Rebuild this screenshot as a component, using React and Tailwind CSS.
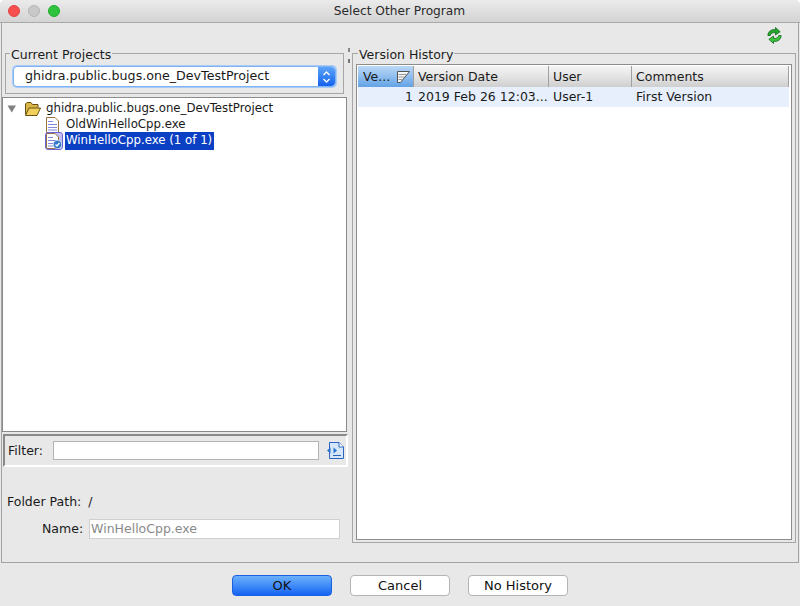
const FONT = 'font-["DejaVu_Sans",sans-serif]'

const COLUMNS = [
  { label: 'Version Date', width: 'w-[135px]' },
  { label: 'User', width: 'w-[83px]' },
  { label: 'Comments', width: 'flex-1' },
]

function FolderIcon() {
  return (
    <svg width="17" height="14" viewBox="0 0 17 14" className="shrink-0">
      <path d="M1.500 12.500V2L3 0.500h4l1.500 2h5.500v3" fill="#d9b548" stroke="#6b5210" />
      <path d="M1.500 13.500h11.500l3.500-7.500H5z" fill="#f0cf5c" stroke="#6b5210" strokeLinejoin="round" />
    </svg>
  )
}

function DocIcon({ checked }) {
  return (
    <svg width="16" height="16" viewBox="0 0 16 16" className="shrink-0">
      <path d="M0.500 0.500h8.500l3.500 3.500v11.500h-12z" fill="#fff" stroke="#9a7440" />
      <path d="M2 4.500h5M2 7.500h9M2 10.500h9M2 13h9" stroke="#8387dc" />
      {checked && <circle cx="11.500" cy="11.500" r="4.200" fill="#2f78c9" stroke="#fff" strokeWidth="0.600" />}
      {checked && <path d="M9.500 11.500l1.500 1.500 2.500-3" fill="none" stroke="#fff" strokeWidth="1.300" />}
    </svg>
  )
}

function RefreshIcon() {
  return (
    <svg width="17" height="17" viewBox="0 0 18 18">
      <path d="M2 9C2 4.500 6 2 10 3V0.500L15 5l-5 3.500V6C7.500 5.500 5 6.500 4.500 9z" fill="#22a82c" stroke="#0c6414" strokeWidth="0.800" strokeLinejoin="round" />
      <path d="M16 9c0 4.500-4 7-8 6v2.500L3 13l5-3.500V12c2.500.5 5-.5 5.500-3z" fill="#3cc43e" stroke="#0c6414" strokeWidth="0.800" strokeLinejoin="round" />
    </svg>
  )
}

function FilterOptionsIcon() {
  return (
    <svg width="17" height="17" viewBox="0 0 17 17">
      <path d="M2.500 0.500h9.500l4.500 4.500v11.500h-14z" fill="#d5e6fa" stroke="#2a64c0" />
      <path d="M12 0.500v4.500h4.500" fill="#fff" stroke="#2a64c0" />
      <path d="M6 13.500h8" stroke="#2a64c0" />
      <path d="M0 8.500L3.500 5.500v6zM10 8.500L6.500 5.500v6z" fill="#2a70d0" />
    </svg>
  )
}

function SortIcon() {
  return (
    <svg width="13" height="12" viewBox="0 0 13 12">
      <path d="M0.500 0.500h12L3.500 11.500h-3z" fill="#f6f6f6" stroke="#555" />
      <path d="M1.500 3.500h8M1.500 6h6M1.500 8.500h4" stroke="#999" />
    </svg>
  )
}

function TitledBox({ title, className, legendClass, children }) {
  return (
    <fieldset className={`border border-[#a6a6a6] ${className}`}>
      <legend className={`px-[1px] pt-[4px] text-[12.500px] leading-[14px] text-[#1c1c1c] ${legendClass}`}>{title}</legend>
      {children}
    </fieldset>
  )
}

function DialogButton({ label, primary }) {
  return (
    <button
      className={
        primary
          ? 'h-[21px] w-[100px] rounded-[4px] border border-[#1a62e0] bg-gradient-to-b from-[#6cb0fb] to-[#1463f3] text-[13px] text-[#111]'
          : 'h-[21px] w-[100px] rounded-[4px] border border-[#b4b4b4] bg-white text-[13px] text-[#111]'
      }
    >
      {label}
    </button>
  )
}

export default function App() {
  return (
    <div className={`flex h-[606px] w-[800px] flex-col overflow-hidden rounded-t-[5px] bg-[#e8e8e8] ${FONT}`}>
      {/* Title bar */}
      <div className="flex h-[23px] shrink-0 items-center border-b border-[#a9a9a9] bg-gradient-to-b from-[#ebebeb] to-[#d3d3d3]">
        <div className="ml-[8px] flex gap-[8px]">
          <span className="h-[12px] w-[12px] rounded-full border border-[#e0443e] bg-[#f74f4f]" />
          <span className="h-[12px] w-[12px] rounded-full border border-[#b4b4b4] bg-[#c8c8c8]" />
          <span className="h-[12px] w-[12px] rounded-full border border-[#1dad2b] bg-[#2fc23d]" />
        </div>
        <span className="flex-1 pr-[61px] text-center text-[12.200px] text-[#2a2a2a]">Select Other Program</span>
      </div>

      {/* Dialog body */}
      <div className="mx-[1px] flex h-[540px] shrink-0 flex-col border-x border-b border-[#a3a3a3]">
        <div className="flex h-[21px] shrink-0 items-start justify-end pr-[15px] pt-[4px]">
          <RefreshIcon />
        </div>

        <div className="flex flex-1">
          {/* Left column */}
          <div className="flex w-[345px] shrink-0 flex-col">
            <TitledBox title="Current Projects" legendClass="-ml-[3px]" className="mx-[3px] h-[50px] px-[7px]">
              <div className="mt-[4px] flex h-[21px] items-center rounded-[4px] border border-[#7fb2f2] bg-white shadow-[0_0_0_1px_#a8ccf7]">
                <span className="flex-1 pl-[11px] text-[12.650px] text-[#1a1a1a]">ghidra.public.bugs.one_DevTestProject</span>
                <span className="flex h-full w-[17px] flex-col items-center justify-center rounded-r-[4px] bg-gradient-to-b from-[#5aa2f8] to-[#1462ee] text-white">
                  <svg width="9" height="14" viewBox="0 0 9 14">
                    <path d="M1.500 5L4.500 2l3 3M1.500 9l3 3 3-3" fill="none" stroke="#fff" strokeWidth="1.300" />
                  </svg>
                </span>
              </div>
            </TitledBox>

            {/* Project tree */}
            <div className="mt-[3px] h-[335px] shrink-0 border border-[#8a8a8a] bg-white pl-[3px] pt-[3px] text-[11.750px] text-[#1a1a1a]">
              <div className="flex h-[16px] items-center">
                <svg width="10" height="8" viewBox="0 0 10 8" className="ml-[1px]">
                  <path d="M0.500 0.500h8.500L4.750 7.500z" fill="#808080" />
                </svg>
                <span className="ml-[7px] flex"><FolderIcon /></span>
                <span className="ml-[5px]">ghidra.public.bugs.one_DevTestProject</span>
              </div>
              <div className="flex h-[16px] items-center pl-[40px]">
                <DocIcon />
                <span className="ml-[4px]">OldWinHelloCpp.exe</span>
              </div>
              <div className="flex h-[16px] items-center pl-[40px]">
                <span className="flex rounded-[2px] bg-[#c5c1f4] outline outline-[#6a62d8]"><DocIcon checked /></span>
                <span className="ml-[3px] bg-[#0b3fc4] pl-[1px] pr-[2px] text-white">WinHelloCpp.exe (1 of 1)</span>
              </div>
            </div>

            {/* Filter */}
            <div className="mt-[2px] ml-[1px] flex h-[33px] w-[345px] shrink-0 items-center border-l-2 border-t-2 border-l-[#8a8a8a] border-t-[#8a8a8a] border-r-2 border-b-2 border-r-white border-b-white pl-[3px]">
              <span className="w-[45px] pt-[1px] text-[12.500px] text-[#1a1a1a]">Filter:</span>
              <div className="h-[19px] w-[266px] border border-[#b4b4b4] bg-white" />
              <span className="ml-[8px] flex"><FilterOptionsIcon /></span>
            </div>

            {/* Folder + name */}
            <div className="mt-[26px] flex h-[18px] items-center pl-[5px] text-[12.500px] text-[#1a1a1a]">
              <span>Folder Path:</span>
              <span className="ml-[7px]">/</span>
            </div>
            <div className="mt-[8px] flex items-center pl-[40px] text-[12.500px] text-[#1a1a1a]">
              <span>Name:</span>
              <div className="ml-[6px] flex h-[20px] w-[251px] items-center border border-[#d0d0d0] bg-white pl-[1px] text-[#8a8a8a]">WinHelloCpp.exe</div>
            </div>
          </div>

          {/* Splitter */}
          <div className="flex w-[5px] shrink-0 flex-col gap-[7px] pl-[1px] pt-[4px]">
            <span className="h-[4px] w-[2px] bg-[#888]" />
            <span className="h-[4px] w-[2px] bg-[#777]" />
          </div>

          {/* Version history */}
          <TitledBox title="Version History" legendClass="ml-[2px]" className="h-[499px] w-[444px] shrink-0 px-[3px]">
            <div className="mt-[2px] flex h-[476px] flex-col border border-[#8c8c8c] bg-white p-[1px] pr-[2px] text-[12.500px] text-[#1a1a1a]">
              <div className="flex h-[21px] shrink-0 items-center bg-gradient-to-b from-[#f4f4f4] via-[#e4e4e4] to-[#cfcfcf]">
                <div className="flex h-full w-[56px] items-center justify-between border-r border-[#a0a0a0] bg-gradient-to-b from-[#bcd8f5] to-[#62a3e6] pl-[5px] pr-[3px] pt-[1px]">
                  <span>Ve...</span>
                  <SortIcon />
                </div>
                {COLUMNS.map(col => (
                  <div key={col.label} className={`flex h-full items-center border-r border-[#a0a0a0] pl-[4px] pt-[1px] ${col.width}`}>
                    {col.label}
                  </div>
                ))}
              </div>
              <div className="flex h-[20px] shrink-0 items-center bg-[#e6effb] pt-[1px]">
                <div className="w-[56px] pr-[1px] text-right">1</div>
                <div className="w-[135px] pl-[4px]">2019 Feb 26 12:03...</div>
                <div className="w-[83px] pl-[4px]">User-1</div>
                <div className="flex-1 pl-[4px]">First Version</div>
              </div>
            </div>
          </TitledBox>
        </div>
      </div>

      {/* Buttons */}
      <div className="flex flex-1 items-start justify-center gap-[18px] pt-[12px]">
        <DialogButton label="OK" primary />
        <DialogButton label="Cancel" />
        <DialogButton label="No History" />
      </div>
    </div>
  )
}
